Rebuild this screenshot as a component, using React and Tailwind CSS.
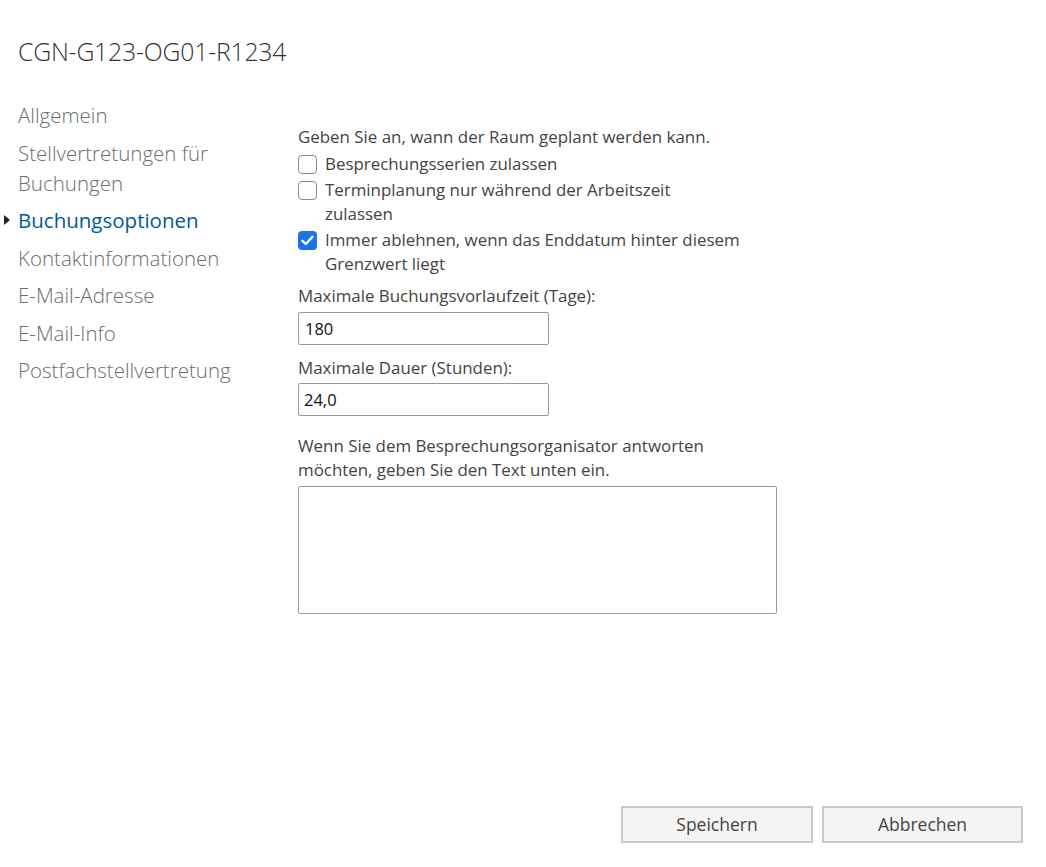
import React from "react";

const font = { fontFamily: '"Open Sans", "Noto Sans", sans-serif' };

export default function App() {
  const nav = [
    "Allgemein",
    "Stellvertretungen für Buchungen",
    "Buchungsoptionen",
    "Kontaktinformationen",
    "E-Mail-Adresse",
    "E-Mail-Info",
    "Postfachstellvertretung",
  ];
  return (
    <div className="w-[1046px] h-[867px] bg-white flex flex-col text-[#333]" style={font}>
      <h1 className="pl-[18px] pt-[33px] text-[24.8px] leading-[36px] font-light text-[#333] tracking-[-0.2px]">
        CGN-G123-OG01-R1234
      </h1>
      <div className="flex flex-1 pt-[31px]">
        <nav className="w-[298px] pl-[18px] flex flex-col gap-[7.5px]">
          {nav.map((n) => {
            const active = n === "Buchungsoptionen";
            return (
              <div key={n} className="relative">
                {active && (
                  <span className="absolute left-[-14px] top-[10px] w-0 h-0 border-y-[5px] border-y-transparent border-l-[6px] border-l-[#222]" />
                )}
                <div
                  className={
                    "w-[225px] text-[20.5px] leading-[30px] " +
                    (active ? "text-[#005a9e] font-normal" : "text-[#6d6d6d] font-light")
                  }
                >
                  {n}
                </div>
              </div>
            );
          })}
        </nav>
        <div className="flex flex-col pt-[25px] text-[16.9px] leading-[24px] text-[#444]">
          <p className="pb-[2px]">Geben Sie an, wann der Raum geplant werden kann.</p>
          <label className="flex gap-[8px] py-[1px]">
            <span className="mt-[3px] w-[19px] h-[19px] rounded-[4px] border border-[#8a8a8a] bg-white shrink-0" />
            <span>Besprechungsserien zulassen</span>
          </label>
          <label className="flex gap-[8px] py-[1px]">
            <span className="mt-[3px] w-[19px] h-[19px] rounded-[4px] border border-[#8a8a8a] bg-white shrink-0" />
            <span>
              Terminplanung nur während der Arbeitszeit
              <br />
              zulassen
            </span>
          </label>
          <label className="flex gap-[8px] py-[1px]">
            <span className="mt-[3px] w-[19px] h-[19px] rounded-[4px] bg-[#1a73e8] shrink-0 flex items-center justify-center">
              <svg width="13" height="11" viewBox="0 0 13 11">
                <path d="M1.5 5.8 L4.8 9 L11.5 1.8" fill="none" stroke="white" strokeWidth="2.4" strokeLinecap="round" strokeLinejoin="round" />
              </svg>
            </span>
            <span>
              Immer ablehnen, wenn das Enddatum hinter diesem
              <br />
              Grenzwert liegt
            </span>
          </label>
          <p className="mt-[7px]">Maximale Buchungsvorlaufzeit (Tage):</p>
          <div className="mt-[4px] w-[251px] h-[33px] border border-[#9a9a9a] rounded-[2px] px-[6px] flex items-center text-[16.5px] text-[#111]">
            180
          </div>
          <p className="mt-[11px]">Maximale Dauer (Stunden):</p>
          <div className="mt-[3px] w-[251px] h-[33px] border border-[#9a9a9a] rounded-[2px] px-[5px] flex items-center text-[16.5px] text-[#111]">
            24,0
          </div>
          <p className="mt-[18px]">
            Wenn Sie dem Besprechungsorganisator antworten
            <br />
            möchten, geben Sie den Text unten ein.
          </p>
          <div className="mt-[4px] w-[479px] h-[128px] border border-[#9a9a9a] rounded-[2px]" />
        </div>
      </div>
      <div className="flex justify-end gap-[9px] pr-[23px] pb-[24px]">
        <button className="w-[192px] h-[37px] bg-[#f4f4f4] border-2 border-[#c8c8c8] text-[17.5px] text-[#444]">
          Speichern
        </button>
        <button className="w-[201px] h-[37px] bg-[#f4f4f4] border-2 border-[#c8c8c8] text-[17.5px] text-[#444]">
          Abbrechen
        </button>
      </div>
    </div>
  );
}
